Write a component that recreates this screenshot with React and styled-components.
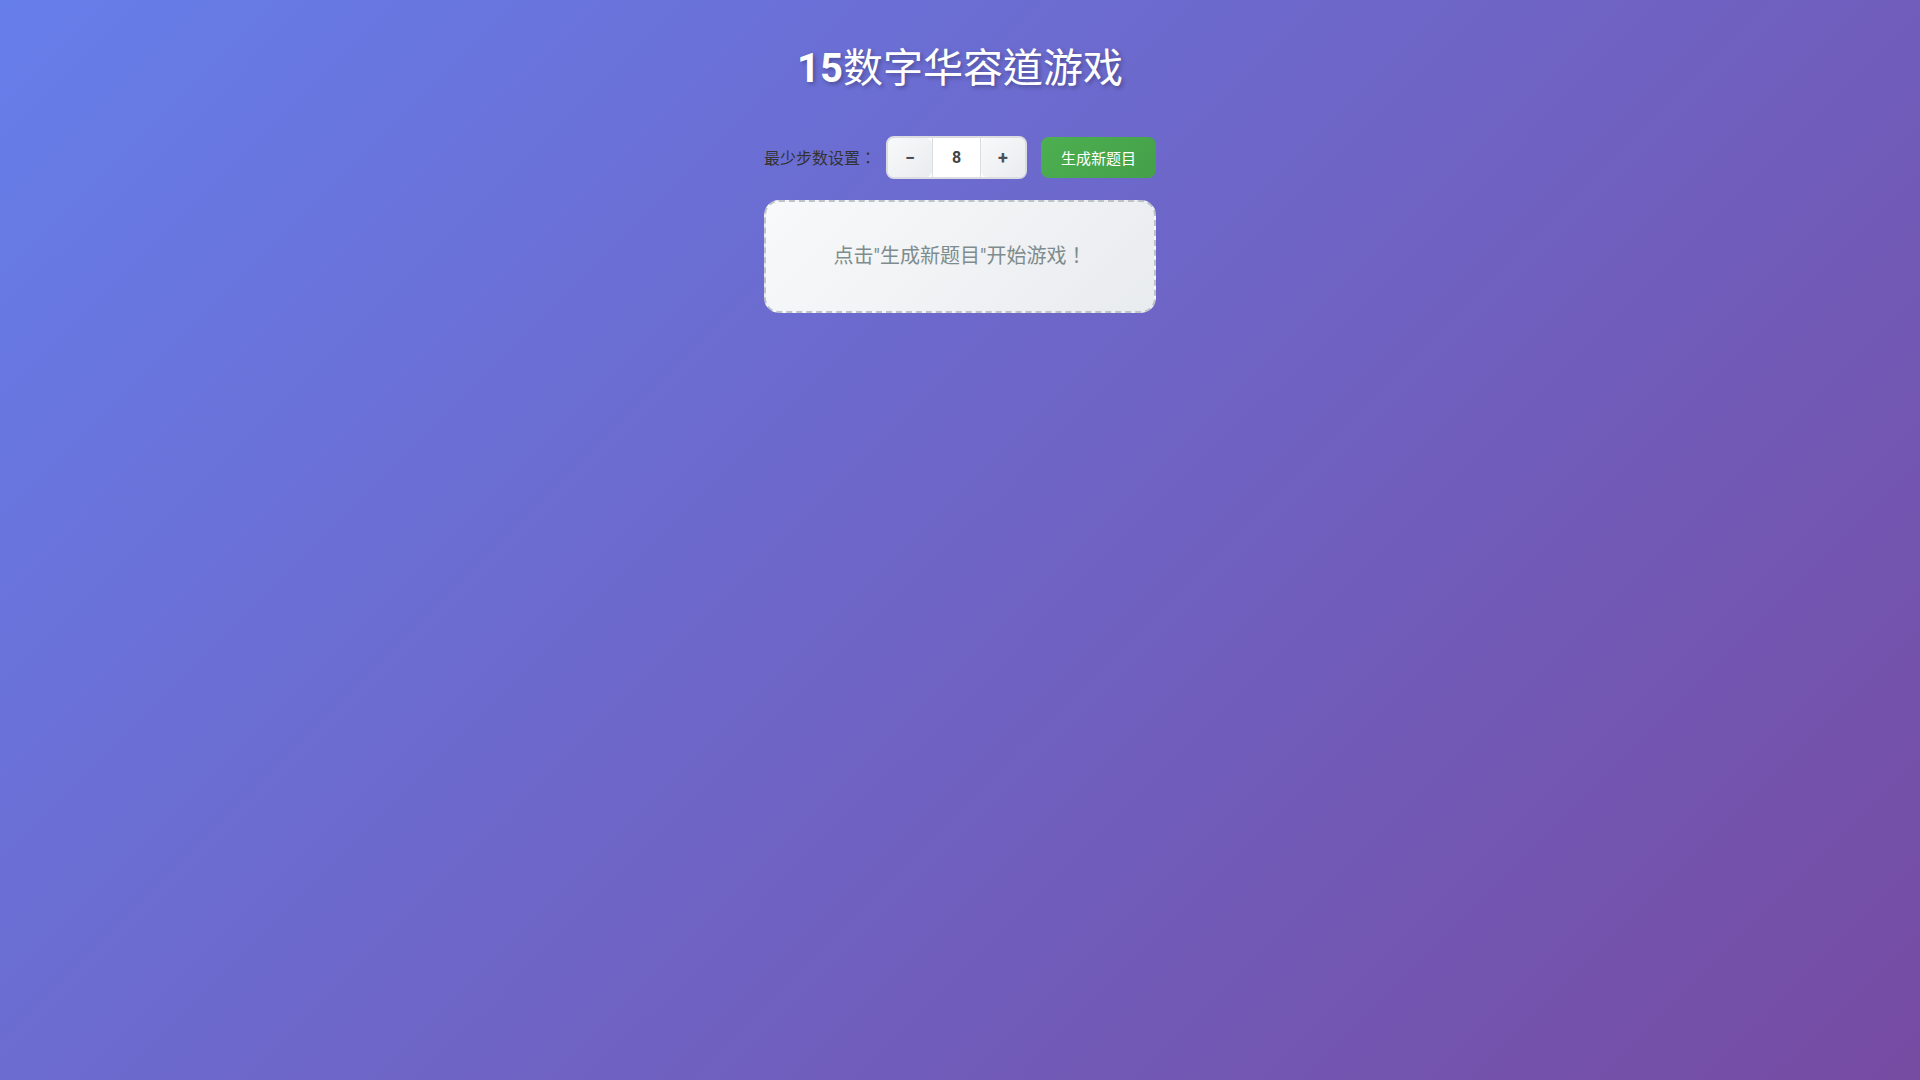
import React, { useState } from 'react';
import styled, { createGlobalStyle } from 'styled-components';

const GlobalStyle = createGlobalStyle`
  html, body {
    margin: 0;
    padding: 0;
  }
  body {
    min-height: 100vh;
    font-family: Roboto, "Noto Sans CJK TC", "Noto Sans CJK SC", sans-serif;
    background: linear-gradient(135deg, #667eea 0%, #764ba2 100%);
    background-attachment: fixed;
  }
`;

const Page = styled.div`
  min-height: 100vh;
  display: flex;
  flex-direction: column;
  align-items: center;
  padding-top: 45px;
  box-sizing: border-box;
`;

const Title = styled.h1`
  margin: 0 0 42px;
  font-size: 40px;
  line-height: 48px;
  font-weight: 400;
  color: #fff;
  text-shadow: 2px 2px 4px rgba(0, 0, 0, 0.3);
`;

const TitleNum = styled.span`
  font-weight: 700;
`;

const Game = styled.div`
  width: 392px;
  display: flex;
  flex-direction: column;
  gap: 21px;
`;

const Controls = styled.div`
  display: flex;
  align-items: center;
  height: 44px;
`;

const Label = styled.label`
  font-size: 16px;
  color: #333;
  margin-right: 10px;
  white-space: nowrap;
`;

const Stepper = styled.div`
  display: flex;
  border: 2px solid #dcdde1;
  border-radius: 8px;
  background: #fff;
  overflow: hidden;
  margin-right: 14px;
`;

const StepButton = styled.button`
  width: 44px;
  height: 39px;
  border: none;
  border-radius: 6px;
  padding: 0;
  background: linear-gradient(135deg, #f8f9fa 0%, #e9ecef 100%);
  color: #495057;
  font-family: Roboto, "Noto Sans CJK TC", sans-serif;
  font-size: 18px;
  font-weight: 700;
  cursor: pointer;
`;

const StepInput = styled.input`
  width: 49px;
  height: 39px;
  box-sizing: border-box;
  border: none;
  border-left: 1px solid #dcdde1;
  border-right: 1px solid #dcdde1;
  text-align: center;
  font-family: Roboto, "Noto Sans CJK TC", sans-serif;
  font-size: 16px;
  font-weight: 700;
  color: #444;
  outline: none;
  padding: 0;
`;

const GenerateButton = styled.button`
  height: 41px;
  padding: 0 20px;
  border: none;
  border-radius: 8px;
  background: linear-gradient(135deg, #4caf50 0%, #45a049 100%);
  color: #fff;
  font-family: Roboto, "Noto Sans CJK TC", sans-serif;
  font-size: 15px;
  cursor: pointer;
  white-space: nowrap;
`;

const Placeholder = styled.div`
  border: 2px dashed #bdc3c7;
  border-radius: 15px;
  padding: 40px 20px;
  background: linear-gradient(135deg, #f8f9fa 0%, #e9ecef 100%);
  text-align: center;
  font-size: 20px;
  line-height: 29px;
  color: #7f8c8d;
`;

export default function App() {
  const [steps, setSteps] = useState(8);

  return (
    <>
      <GlobalStyle />
      <Page>
        <Title>
          <TitleNum>15</TitleNum>数字华容道游戏
        </Title>
        <Game>
          <Controls>
            <Label>最少步数设置：</Label>
            <Stepper>
              <StepButton onClick={() => setSteps(Math.max(1, steps - 1))}>−</StepButton>
              <StepInput value={steps} readOnly />
              <StepButton onClick={() => setSteps(steps + 1)}>+</StepButton>
            </Stepper>
            <GenerateButton>生成新题目</GenerateButton>
          </Controls>
          <Placeholder>点击"生成新题目"开始游戏！</Placeholder>
        </Game>
      </Page>
    </>
  );
}
